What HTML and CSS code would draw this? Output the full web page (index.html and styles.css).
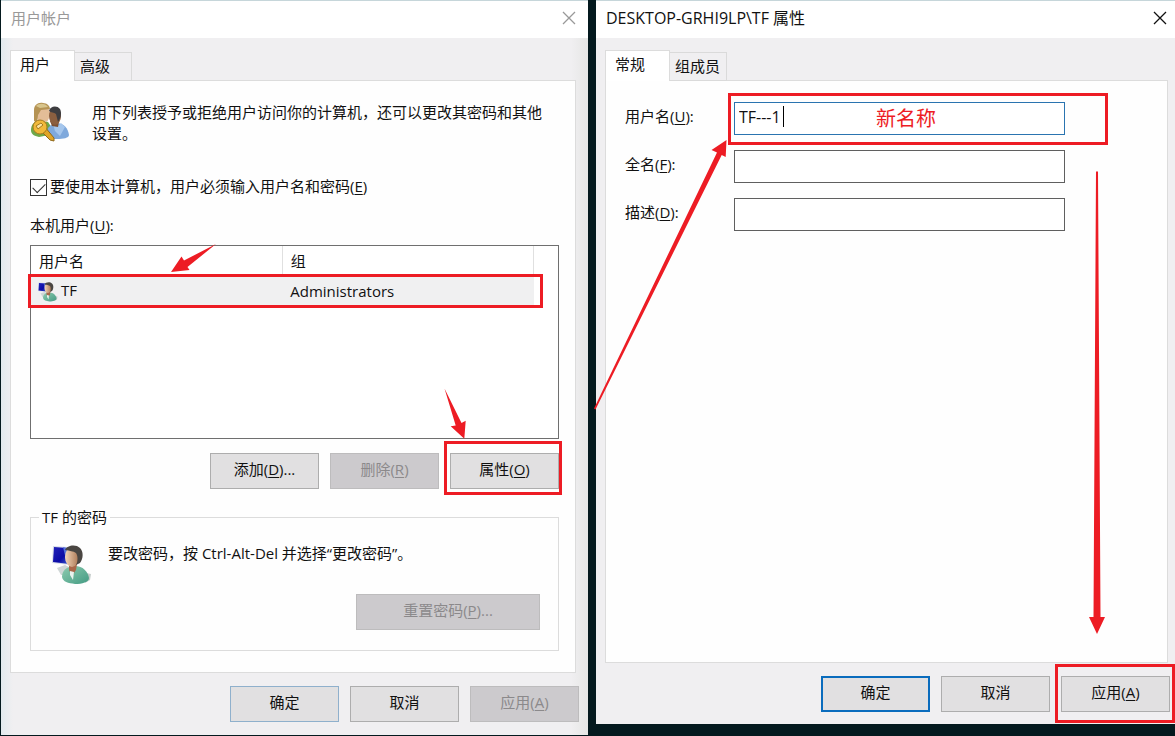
FILE: index.html
```html
<!DOCTYPE html>
<html lang="zh-CN">
<head>
    <meta charset="UTF-8">
    <meta name="viewport" content="width=device-width, initial-scale=1.0">
    <title>用户帐户</title>
    <link rel="stylesheet" href="styles.css">
</head>
<body>
    <!-- shared icon: user in front of a monitor -->
    <svg class="defs" width="0" height="0" aria-hidden="true">
        <defs>
            <linearGradient id="screen" x1="0" y1="0" x2="1" y2="1">
                <stop offset="0" stop-color="#2222b8"/>
                <stop offset="0.6" stop-color="#0b0ba6"/>
                <stop offset="1" stop-color="#3c5fd0"/>
            </linearGradient>
            <linearGradient id="skin" x1="0" y1="0" x2="1" y2="0">
                <stop offset="0" stop-color="#f3d5b8"/>
                <stop offset="1" stop-color="#a97552"/>
            </linearGradient>
            <linearGradient id="green" x1="0" y1="0" x2="1" y2="1">
                <stop offset="0" stop-color="#8fccb0"/>
                <stop offset="1" stop-color="#439b83"/>
            </linearGradient>
            <symbol id="pc-user" viewBox="0 0 40 40">
                <path d="M5 23l8-3 6 3-3 7-7 0z" fill="#cfd6d6"/>
                <path d="M1 1l15 1 2 18-18-2z" fill="#d5dae8"/>
                <path d="M2 2l13 1 2 16-16-2z" fill="url(#screen)"/>
                <path d="M11 2l4 1 2 12-2 4z" fill="#5672d8"/>
                <path d="M34 28l5 1-1 6-5 3z" fill="#c5ccca"/>
                <path d="M10 32c0-7 5-10 11-11 9-1 15 5 16 12 0 4-7 6-14 6-7-1-12-2-13-7z" fill="url(#green)"/>
                <path d="M17 19h8l-1 6-4 6-3-6z" fill="#a9674a"/>
                <path d="M18 26l4 1-1 8-3-5z" fill="#e9f3ee"/>
                <ellipse cx="20" cy="12" rx="7" ry="10" fill="url(#skin)"/>
                <path d="M13 5c2-5 11-6 15-2 4 4 3 11 0 15l-4 2c2-4 2-9 0-12-3-2-6-2-11-3z" fill="#4a4642"/>
            </symbol>
        </defs>
    </svg>

    <main class="desktop">
        <section class="window accounts inactive">
            <header class="titlebar">
                <h1>用户帐户</h1>
                <button class="close" type="button" aria-label="关闭">
                    <svg viewBox="0 0 14 14"><path d="M1 1l12 12M13 1L1 13"/></svg>
                </button>
            </header>

            <div class="tabs" role="tablist">
                <button class="tab selected" role="tab" aria-selected="true" type="button">用户</button>
                <button class="tab" role="tab" aria-selected="false" type="button">高级</button>
            </div>

            <div class="panel" role="tabpanel">
                <div class="intro">
                    <svg class="icon" viewBox="0 0 40 40" aria-hidden="true">
                        <path d="M1 28c0-6 4-9 9-10l8 2 4 6-3 7-10 2c-5-1-8-3-8-7z" fill="#6fa84a"/>
                        <ellipse cx="13" cy="12" rx="7" ry="9" fill="#e3bd97"/>
                        <path d="M4 8c0-5 4-8 9-7 4 0 7 3 7 6l-9 1-3 5-1 8-3-2z" fill="#b59354"/>
                        <path d="M6 4c3-3 9-3 12 1l-8 1z" fill="#d8c58c"/>
                        <path d="M16 34c0-7 4-12 10-13 8 0 12 5 13 12 0 3-6 4-12 4-5 0-10 0-11-3z" fill="#7fa9dc"/>
                        <path d="M23 22l5 2 3-3 4 4-5 9-5-5z" fill="#a5c6ec"/>
                        <path d="M20 19h9l-1 6-6-1z" fill="#7d5134"/>
                        <ellipse cx="25" cy="14" rx="6" ry="9" fill="#8b5f40"/>
                        <path d="M19 9c1-5 8-6 11-2 2 4 1 9-2 13l-2-8c-2-2-5-1-7-3z" fill="#3e3d40"/>
                        <path d="M15 25l9 11 0 3-4-1-9-9z" fill="#e0a526" stroke="#8f681a"/>
                        <circle cx="10" cy="25" r="7" fill="#f1b93a" stroke="#a67c1e"/>
                        <path d="M6 24l5-3 2 2-5 4z" fill="#fae3a0" stroke="#a67c1e"/>
                    </svg>
                    <p>用下列表授予或拒绝用户访问你的计算机，还可以更改其密码和其他设置。</p>
                </div>

                <div class="check-row">
                    <input type="checkbox" id="requireLogin" checked>
                    <label for="requireLogin">要使用本计算机，用户必须输入用户名和密码(<u>E</u>)</label>
                </div>

                <p class="list-label" id="userListLabel">本机用户(<u>U</u>):</p>
                <div class="list">
                    <table aria-labelledby="userListLabel">
                        <thead>
                            <tr><th>用户名</th><th>组</th></tr>
                        </thead>
                        <tbody>
                            <tr>
                                <td><svg class="icon-small" aria-hidden="true"><use href="#pc-user"/></svg>TF</td>
                                <td>Administrators<span class="mark mark-row"></span></td>
                            </tr>
                        </tbody>
                    </table>
                </div>

                <div class="actions">
                    <button class="btn" type="button">添加(<u>D</u>)...</button>
                    <button class="btn" type="button" disabled>删除(<u>R</u>)</button>
                    <button class="btn" type="button">属性(<u>O</u>)<span class="mark mark-props"></span></button>
                </div>

                <fieldset class="password">
                    <legend>TF 的密码</legend>
                    <div class="password-info">
                        <svg class="icon" aria-hidden="true"><use href="#pc-user"/></svg>
                        <p>要改密码，按 Ctrl-Alt-Del 并选择“更改密码”。</p>
                    </div>
                    <button class="btn reset" type="button" disabled>重置密码(<u>P</u>)...</button>
                </fieldset>
            </div>

            <footer class="actions">
                <button class="btn ok" type="button">确定</button>
                <button class="btn" type="button">取消</button>
                <button class="btn" type="button" disabled>应用(<u>A</u>)</button>
            </footer>
        </section>

        <section class="window properties">
            <header class="titlebar">
                <h1>DESKTOP-GRHI9LP\TF 属性</h1>
                <button class="close" type="button" aria-label="关闭">
                    <svg viewBox="0 0 14 14"><path d="M1 1l12 12M13 1L1 13"/></svg>
                </button>
            </header>

            <div class="tabs" role="tablist">
                <button class="tab selected" role="tab" aria-selected="true" type="button">常规</button>
                <button class="tab" role="tab" aria-selected="false" type="button">组成员</button>
            </div>

            <div class="panel" role="tabpanel">
                <form class="fields">
                    <label for="userName">用户名(<u>U</u>):</label>
                    <div class="field">
                        <input type="text" id="userName" class="focused" value="TF---1">
                        <span class="caret"></span>
                        <span class="note">新名称</span>
                        <span class="mark mark-name"></span>
                    </div>
                    <label for="fullName">全名(<u>F</u>):</label>
                    <div class="field"><input type="text" id="fullName"></div>
                    <label for="description">描述(<u>D</u>):</label>
                    <div class="field"><input type="text" id="description"></div>
                </form>
            </div>

            <footer class="actions">
                <button class="btn default" type="button">确定</button>
                <button class="btn" type="button">取消</button>
                <button class="btn" type="button">应用(<u>A</u>)<span class="mark mark-apply"></span></button>
            </footer>
        </section>

        <!-- red arrows drawn over both windows -->
        <svg class="arrows" aria-hidden="true">
            <path d="M216 244L187.500 267L189.500 270L171 272L181.500 256.500L184 260.500Z"/>
            <path d="M444.500 388.500L461.500 423L465.700 420.700L464.300 438.700L450.700 426.300L455.700 425.500Z"/>
            <path d="M594 408.500L717 152.500L711.500 150L726.500 140L725.700 157L721.700 155L595.500 409.500Z"/>
            <path d="M1096 171.500H1098L1100.500 617H1105L1097 634L1089 617H1093.500Z"/>
        </svg>
    </main>
</body>
</html>
```

FILE: styles.css
```css
* {
    box-sizing: border-box;
}
body {
    margin: 0;
    font-family: "Open Sans", "Noto Sans CJK SC", sans-serif;
    font-size: 15px;
    line-height: 21px;
    color: #111;
    background: #04191e;
}
h1, p {
    margin: 0;
    font-size: 15px;
    font-weight: 400;
}
button, input {
    font: inherit;
    color: inherit;
}
u {
    text-underline-offset: 2px;
}
.defs {
    position: absolute;
}

.desktop {
    position: relative;
    display: grid;
    grid-template-columns: 587fr 579fr;
    gap: 8px;
    align-items: start;
    min-height: 100vh;
    padding-left: 1px;
}

/* windows */
.window {
    border-top: 1px solid #c6d6da;
    background: #f0eff1;
}
.accounts {
    padding-bottom: 13px;
    background: linear-gradient(to right, #e2eaee, #f0eff1 12px, #f0eff1 570px, #e6e6e5);
}
.properties {
    padding-bottom: 12px;
}
.titlebar {
    display: flex;
    justify-content: space-between;
    align-items: center;
    height: 37px;
    padding: 0 11px 3px 10px;
    background: #fff;
}
.properties .titlebar {
    padding-right: 7px;
}
.properties h1 {
    font-size: 16px;
}
.inactive .titlebar {
    color: #999;
}
.close {
    display: flex;
    padding: 1px;
    border: none;
    background: none;
}
.close svg {
    width: 14px;
    height: 14px;
    fill: none;
    stroke: currentColor;
    stroke-width: 1.3;
}

/* tabs */
.tabs {
    display: flex;
    align-items: flex-end;
    height: 43px;
    padding-left: 9px;
}
.tab {
    width: 57px;
    height: 29px;
    padding: 0 5px;
    border: 1px solid #dadada;
    border-left: none;
    background: #f0eff1;
    text-align: left;
    white-space: nowrap;
}
.tab.selected {
    position: relative;
    width: 65px;
    height: 31px;
    padding: 0 9px 3px;
    border: 1px solid #dcdcdc;
    border-bottom: none;
    background: #fff;
}
.panel {
    margin: -1px 12px 0 9px;
    padding: 21px 16px 21px 19px;
    border: 1px solid #dcdcdc;
    background: #fefefe;
}
.properties .panel {
    min-height: 583px;
    margin-right: 7px;
}

/* buttons */
.actions {
    display: flex;
    justify-content: flex-end;
    gap: 11px;
}
.window > .actions {
    padding: 13px 9px 0;
}
.properties > .actions {
    padding-right: 5px;
}
.btn {
    position: relative;
    width: 109px;
    height: 36px;
    padding: 0 0 3px;
    border: 1px solid #adadad;
    background: #e1e0e1;
}
.btn:disabled {
    border-color: #bdbcbd;
    background: #cccacd;
    color: #8b898b;
}
.btn.ok {
    border-color: #8fb0cc;
}
.btn.default {
    border: 2px solid #0a6cbd;
}

/* accounts window */
.icon {
    flex: none;
    width: 40px;
    height: 40px;
}
.intro {
    display: flex;
    gap: 22px;
    padding-right: 10px;
}
.check-row {
    display: flex;
    align-items: center;
    gap: 3px;
    margin-top: 32px;
}
.check-row label {
    padding-bottom: 2px;
}
.check-row input {
    appearance: none;
    display: grid;
    place-items: center;
    width: 17px;
    height: 17px;
    margin: 0;
    border: 1px solid #333;
    background: #fff;
}
.check-row input:checked::before {
    content: "";
    width: 11px;
    height: 6px;
    margin-top: -3px;
    border: solid #333;
    border-width: 0 0 1px 1px;
    transform: rotate(-45deg);
}
.list-label {
    margin-top: 16px;
}
.list {
    height: 194px;
    margin-top: 9px;
    padding-right: 24px;
    border: 1px solid #6f6f6f;
    background: #fff;
}
table {
    width: 100%;
    border-collapse: collapse;
    table-layout: fixed;
}
th, td {
    height: 30px;
    padding: 0 8px;
    font-weight: 400;
    text-align: left;
}
th {
    border-right: 1px solid #e0e0e0;
}
tbody tr {
    position: relative;
    background: #f0f0f1;
}
td:first-child {
    padding-left: 7px;
}
.icon-small {
    width: 20px;
    height: 20px;
    margin-right: 3px;
    vertical-align: middle;
}
.panel .actions {
    margin-top: 14px;
}
.password {
    margin: 18px 0 0;
    padding: 15px 18px 20px 21px;
    border: 1px solid #dcdcdc;
}
legend {
    margin-left: -13px;
    padding: 0 3px;
}
.password-info {
    display: flex;
    gap: 16px;
}
.password-info .icon {
    margin-top: 2px;
}
.reset {
    display: block;
    width: 184px;
    margin: 9px 0 0 auto;
}

/* properties window */
.fields {
    display: grid;
    grid-template-columns: 109px 1fr;
    row-gap: 15px;
    padding-right: 86px;
}
.fields label {
    padding-top: 4px;
}
.field {
    position: relative;
}
.field input {
    display: block;
    width: 100%;
    height: 33px;
    padding: 0 4px 4px;
    border: 1px solid #5f5f5f;
    border-radius: 0;
    background: #fff;
    font-size: 16px;
    outline: none;
}
.field input.focused {
    border-color: #2a74b0;
}
.caret {
    position: absolute;
    top: 4px;
    left: 49px;
    width: 1px;
    height: 21px;
    background: #000;
}
.note {
    position: absolute;
    top: 6px;
    left: 142px;
    font-size: 20px;
    color: #ed1c24;
}

/* red marks over the controls */
.mark {
    position: absolute;
    border: 3px solid #ed1c24;
    pointer-events: none;
}
.mark-row {
    inset: -2px -9px -2px -3px;
}
.mark-props {
    inset: -13px -4px -7px -7px;
}
.mark-name {
    inset: -9px -43px -10px -6px;
}
.mark-apply {
    inset: -13px -6px -12px -7px;
}
.arrows {
    position: absolute;
    inset: 0;
    width: 100%;
    height: 100%;
    fill: #ed1c24;
    pointer-events: none;
}
```
